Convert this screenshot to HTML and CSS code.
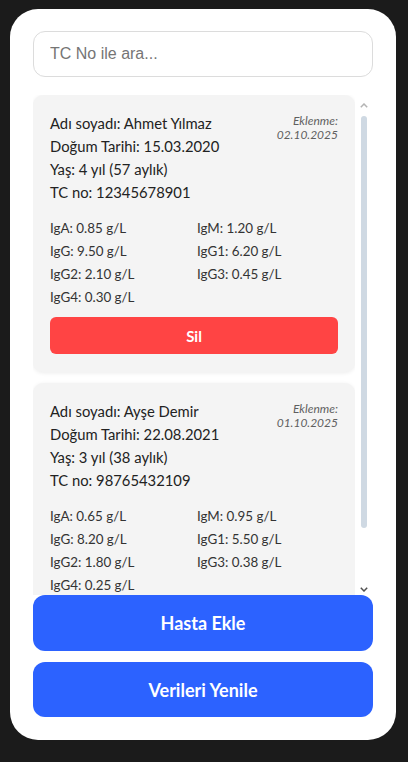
FILE: index.html
```html
<!DOCTYPE html>
<html lang="tr">
<head>
<meta charset="utf-8">
<title>Hasta Listesi</title>
<link rel="stylesheet" href="styles.css">
</head>
<body>
<main class="app">
  <input class="search" type="text" placeholder="TC No ile ara...">
  <div class="list-wrap">
    <div class="list">
      <article class="patient">
        <div class="head">
          <div class="info">
            <div>Adı soyadı: Ahmet Yılmaz</div>
            <div>Doğum Tarihi: 15.03.2020</div>
            <div>Yaş: 4 yıl (57 aylık)</div>
            <div>TC no: 12345678901</div>
          </div>
          <div class="added">Eklenme:<br>02.10.2025</div>
        </div>
        <div class="ig">
          <div>IgA: 0.85 g/L</div><div>IgM: 1.20 g/L</div>
          <div>IgG: 9.50 g/L</div><div>IgG1: 6.20 g/L</div>
          <div>IgG2: 2.10 g/L</div><div>IgG3: 0.45 g/L</div>
          <div>IgG4: 0.30 g/L</div>
        </div>
        <button class="del">Sil</button>
      </article>
      <article class="patient">
        <div class="head">
          <div class="info">
            <div>Adı soyadı: Ayşe Demir</div>
            <div>Doğum Tarihi: 22.08.2021</div>
            <div>Yaş: 3 yıl (38 aylık)</div>
            <div>TC no: 98765432109</div>
          </div>
          <div class="added">Eklenme:<br>01.10.2025</div>
        </div>
        <div class="ig">
          <div>IgA: 0.65 g/L</div><div>IgM: 0.95 g/L</div>
          <div>IgG: 8.20 g/L</div><div>IgG1: 5.50 g/L</div>
          <div>IgG2: 1.80 g/L</div><div>IgG3: 0.38 g/L</div>
          <div>IgG4: 0.25 g/L</div>
        </div>
        <button class="del">Sil</button>
      </article>
    </div>
    <div class="scrollbar">
      <svg class="arrow up" width="8" height="5" viewBox="0 0 8 5"><path d="M0.8 4.2 L4 1 L7.2 4.2" fill="none" stroke="#b4b4b4" stroke-width="1.5"/></svg>
      <div class="thumb"></div>
      <div class="spacer"></div>
      <svg class="arrow down" width="8" height="5" viewBox="0 0 8 5"><path d="M0.8 0.8 L4 4 L7.2 0.8" fill="none" stroke="#505050" stroke-width="1.5"/></svg>
    </div>
  </div>
  <button class="primary">Hasta Ekle</button>
  <button class="primary second">Verileri Yenile</button>
</main>
</body>
</html>
```

FILE: styles.css
```css
* { box-sizing: border-box; }
html, body { margin: 0; }
body {
  background: #1b1b1b;
  padding: 9px 12px 22px 10px;
  font-family: "Segoe UI", Lato, "Noto Sans", sans-serif;
  color: #222;
}
.app {
  background: #fff;
  border-radius: 28px;
  padding: 22px 23px 23px 23px;
  display: flex;
  flex-direction: column;
}
.search {
  height: 46px;
  border: 1px solid #dcdcdc;
  border-radius: 12px;
  padding: 0 16px;
  font-family: "Liberation Sans", Arial, sans-serif;
  font-size: 16px;
  color: #333;
  outline: none;
}
.search::placeholder { color: #757575; }
.list-wrap {
  margin-top: 18px;
  height: 500px;
  display: flex;
}
.list {
  width: 322px;
  overflow: hidden;
  display: flex;
  flex-direction: column;
  gap: 11px;
  padding-bottom: 4px;
}
.patient {
  flex: none;
  background: #f4f4f4;
  border-radius: 10px;
  padding: 17px 17px 18px 17px;
  box-shadow: 0 1px 4px rgba(0,0,0,0.08);
}
.head {
  display: flex;
  justify-content: space-between;
  align-items: flex-start;
}
.info {
  font-size: 14.8px;
  line-height: 23px;
  color: #222;
}
.added {
  font-size: 12px;
  line-height: 14px;
  font-style: italic;
  color: #5f5f5f;
  text-align: right;
  margin-top: 2px;
}
.ig {
  margin-top: 13px;
  display: grid;
  grid-template-columns: 147px 1fr;
  font-size: 13.4px;
  line-height: 23px;
  color: #333;
}
.del {
  display: block;
  width: 100%;
  margin-top: 8px;
  height: 37px;
  border: none;
  border-radius: 6px;
  background: #ff4444;
  color: #fff;
  font-family: inherit;
  font-weight: 700;
  font-size: 15px;
}
.scrollbar {
  width: 18px;
  display: flex;
  flex-direction: column;
  align-items: center;
  padding: 8px 0 3px 0;
}
.arrow { display: block; flex: none; }
.thumb {
  margin-top: 8px;
  width: 6px;
  height: 412px;
  border-radius: 3px;
  background: #cfd9e3;
  flex: none;
}
.spacer { flex: 1; }
.primary {
  height: 56px;
  border: none;
  border-radius: 12px;
  background: #2c62ff;
  color: #fff;
  font-family: inherit;
  font-weight: 700;
  font-size: 18px;
}
.second { margin-top: 11px; height: 55px; }
```
